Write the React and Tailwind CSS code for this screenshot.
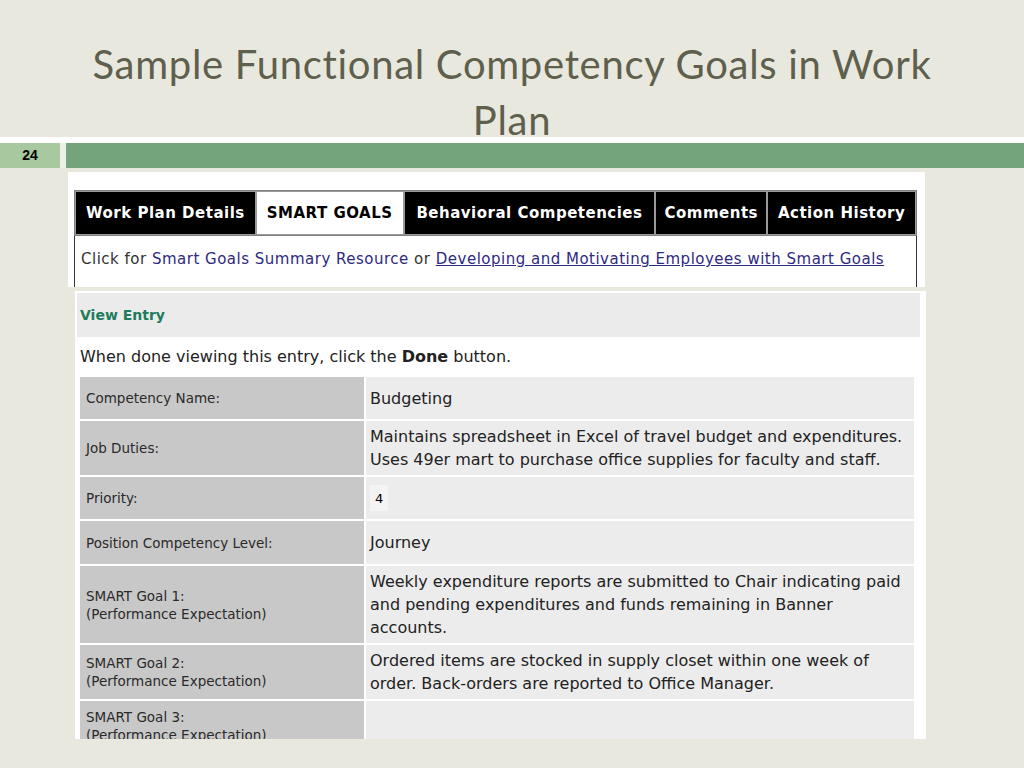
const tabs = [
  { label: 'Work Plan Details', w: 'w-[181px]', active: false },
  { label: 'SMART GOALS', w: 'w-[148px]', active: true },
  { label: 'Behavioral Competencies', w: 'w-[252px]', active: false },
  { label: 'Comments', w: 'w-[112px]', active: false },
  { label: 'Action History', w: 'w-[149px]', active: false },
]

const rows = [
  { label: ['Competency Name:'], value: ['Budgeting'], h: 'h-[42px]' },
  {
    label: ['Job Duties:'],
    value: [
      'Maintains spreadsheet in Excel of travel budget and expenditures.',
      'Uses 49er mart to purchase office supplies for faculty and staff.',
    ],
    h: 'h-[54px]',
  },
  { label: ['Priority:'], value: null, h: 'h-[42px]' },
  { label: ['Position Competency Level:'], value: ['Journey'], h: 'h-[43px]' },
  {
    label: ['SMART Goal 1:', '(Performance Expectation)'],
    value: [
      'Weekly expenditure reports are submitted to Chair indicating paid',
      'and pending expenditures and funds remaining in Banner',
      'accounts.',
    ],
    h: 'h-[77px]',
  },
  {
    label: ['SMART Goal 2:', '(Performance Expectation)'],
    value: [
      'Ordered items are stocked in supply closet within one week of',
      'order. Back-orders are reported to Office Manager.',
    ],
    h: 'h-[54px]',
  },
  {
    label: ['SMART Goal 3:', '(Performance Expectation)'],
    value: [],
    h: 'h-[50px]',
  },
]

const App = () => {
  return (
    <div className="w-[1024px] h-[768px] bg-[#e9e8de] overflow-hidden font-['DejaVu_Sans',sans-serif]">
      {/* slide title */}
      <h1 className="h-[137px] pt-[36px] text-center text-[40px] leading-[56px] text-[#5f5f4e] font-['Lato',sans-serif] tracking-[0.7px]">
        Sample Functional Competency Goals in Work
        <br />
        Plan
      </h1>
      <div className="h-[6px] bg-white" />
      <div className="flex h-[25px]">
        <div className="w-[60px] bg-[#a8c8a0] flex items-center justify-center text-[14px] font-bold text-black font-['Liberation_Sans',sans-serif]">
          24
        </div>
        <div className="w-[6px] bg-[#eef0e8]" />
        <div className="flex-1 bg-[#74a47b]" />
      </div>

      {/* tabs screenshot */}
      <div className="mt-[4px] ml-[68px] w-[857px] h-[115px] bg-white pt-[18px] pl-[6px] overflow-hidden">
        <div className="w-[843px] flex border border-[#808080] bg-black">
          {tabs.map((t) => (
            <div
              key={t.label}
              className={`${t.w} h-[44px] flex items-center justify-center border border-[#9a9a9a] text-[15px] tracking-[0.5px] font-bold ${
                t.active ? 'bg-white text-black' : 'bg-black text-white'
              }`}
            >
              {t.label}
            </div>
          ))}
        </div>
        <div className="w-[843px] h-[60px] border-x border-[#333] px-[6px] pt-[12px] text-[15px] tracking-[0.5px] text-[#333]">
          Click for <span className="text-[#2e2a7f]">Smart Goals Summary Resource</span> or{' '}
          <span className="text-[#2e2a7f] underline">Developing and Motivating Employees with Smart Goals</span>
        </div>
      </div>

      {/* view entry screenshot */}
      <div className="mt-[4px] ml-[75px] w-[851px] h-[448px] bg-white pt-[2px] pl-[2px] overflow-hidden">
        <div className="w-[843px] h-[44px] bg-[#ebebeb] flex items-center pl-[3px] text-[14px] font-bold text-[#1e7b5c]">
          View Entry
        </div>
        <div className="h-[40px] flex items-center pl-[3px] text-[16px] text-[#222]">
          <span>
            When done viewing this entry, click the <b>Done</b> button.
          </span>
        </div>
        <div className="ml-[3px] w-[834px] flex flex-col gap-[2px]">
          {rows.map((r) => (
            <div key={r.label[0]} className={`flex gap-[2px] ${r.h}`}>
              <div className="w-[284px] shrink-0 bg-[#c8c8c8] flex flex-col justify-center pl-[6px] text-[13.5px] leading-[18px] text-[#2a2a2a]">
                {r.label.map((l) => (
                  <span key={l}>{l}</span>
                ))}
              </div>
              <div className="flex-1 bg-[#ececec] flex flex-col justify-center pl-[4px] text-[16px] leading-[23px] text-[#222]">
                {r.value ? (
                  r.value.map((v) => <span key={v}>{v}</span>)
                ) : (
                  <span className="self-start bg-[#f4f4f4] h-[26px] px-[5px] flex items-center text-[13px] text-black">
                    4
                  </span>
                )}
              </div>
            </div>
          ))}
        </div>
      </div>
    </div>
  )
}

export default App
